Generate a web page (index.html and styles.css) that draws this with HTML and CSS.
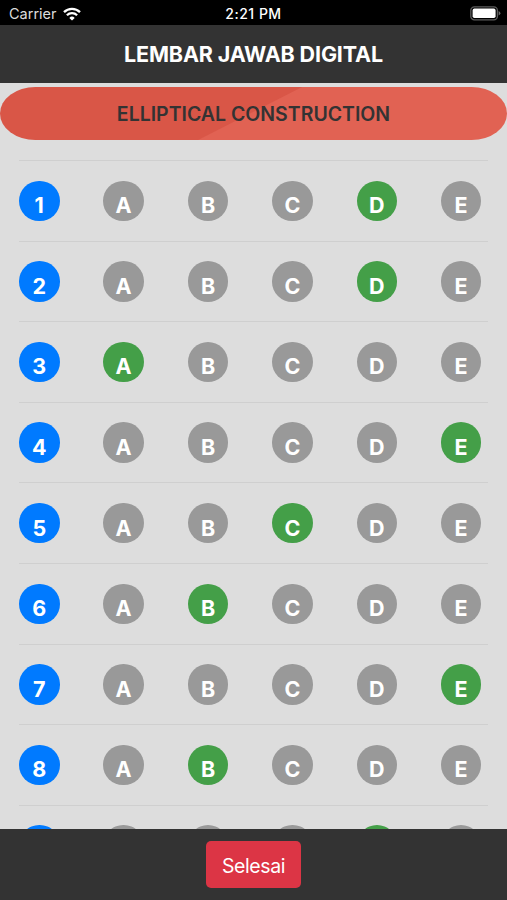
FILE: index.html
```
<!DOCTYPE html>
<html lang="id">
<head>
  <meta charset="UTF-8" />
  <meta name="viewport" content="width=device-width, initial-scale=1.0" />
  <title>Lembar Jawab Digital</title>
  <link rel="stylesheet" href="styles.css">
</head>
<body>
  <div class="screen">
    <div class="status-bar">
      <div class="carrier">
        <span>Carrier</span>
        <svg class="wifi" viewBox="0 0 18 14" fill="none" stroke="#fff" stroke-width="2.3">
          <path d="M1 5.1 A11.4 11.4 0 0 1 17 5.1" />
          <path d="M3.9 8.2 A7.2 7.2 0 0 1 14.1 8.2" />
          <path d="M9 13.6 L6.3 10.9 A3.8 3.8 0 0 1 11.7 10.9 Z" fill="#fff" stroke="none" />
        </svg>
      </div>
      <div class="clock">2:21 PM</div>
      <svg class="battery" viewBox="0 0 31 15">
        <rect x="0.8" y="0.8" width="26.6" height="13" rx="3.6" fill="none" stroke="#5c5c5c" stroke-width="1.3" />
        <rect x="2.6" y="2.6" width="23" height="9.4" rx="1.8" fill="#fff" />
        <path d="M28.6 5 Q30.4 5.8 30.4 7.3 Q30.4 8.8 28.6 9.6 Z" fill="#6b6b6b" />
      </svg>
    </div>

    <div class="header">LEMBAR JAWAB DIGITAL</div>

    <div class="content">
      <div class="subject">ELLIPTICAL CONSTRUCTION</div>
      <div class="answers" id="answers"></div>
    </div>

    <div class="footer">
      <button class="finish-btn">Selesai</button>
    </div>
  </div>

  <script>
    const options = ["A", "B", "C", "D", "E"];
    const answers = ["D", "D", "A", "E", "C", "B", "E", "B", "D"];

    function displayAnswers() {
      const list = document.getElementById("answers");
      list.innerHTML = "";

      answers.forEach((answer, index) => {
        const row = document.createElement("div");
        row.className = "row";

        let html = `<div class="circle number"><span>${index + 1}</span></div>`;
        options.forEach(option => {
          const selected = option === answer ? " selected" : "";
          html += `<div class="circle${selected}"><span>${option}</span></div>`;
        });

        row.innerHTML = html;
        list.appendChild(row);
      });
    }

    displayAnswers();
  </script>
</body>
</html>
```
FILE: styles.css
```
* {
  box-sizing: border-box;
  margin: 0;
  padding: 0;
  font-family: Inter, "Liberation Sans", sans-serif;
}

.screen {
  height: 100vh;
  display: flex;
  flex-direction: column;
  overflow: hidden;
  background: #dddddd;
}

.status-bar {
  flex: none;
  height: 25px;
  padding: 2px 6px 0 9px;
  display: grid;
  grid-template-columns: 1fr auto 1fr;
  align-items: center;
  background: #000;
  color: #fff;
  font-size: 14.5px;
}

.carrier {
  display: flex;
  align-items: center;
  gap: 6px;
  color: #dcdcdc;
}

.wifi {
  width: 18px;
  height: 14px;
}

.clock {
  font-size: 14px;
  font-weight: 500;
  letter-spacing: 0.5px;
  margin-right: 3px;
}

.battery {
  width: 31px;
  height: 15px;
  justify-self: end;
}

.header {
  flex: none;
  height: 57.5px;
  display: flex;
  align-items: center;
  justify-content: center;
  background: #333;
  color: #fff;
  font-size: 21.5px;
  font-weight: 700;
  letter-spacing: -0.15px;
}

.content {
  flex: 1;
  min-height: 0;
  padding-top: 4px;
  overflow: hidden;
}

.subject {
  height: 53.5px;
  padding-top: 2px;
  display: flex;
  align-items: center;
  justify-content: center;
  border-radius: 36px / 27px;
  background: linear-gradient(153deg, #d95647 calc(50% - 2px), #e16253 calc(50% - 1px));
  color: #333;
  font-size: 19.5px;
  font-weight: 600;
}

.answers {
  padding: 20px 19px 0;
}

.row {
  height: 80.6px;
  padding-right: 6.6px;
  display: flex;
  align-items: center;
  justify-content: space-between;
  border-top: 1px solid #cfcfcf;
}

.circle {
  width: 40.5px;
  height: 40.5px;
  padding-top: 9px;
  display: flex;
  align-items: center;
  justify-content: center;
  border-radius: 50%;
  background: #999;
  color: #fff;
  font-size: 21.5px;
  font-weight: 700;
}

.number {
  background: #007aff;
}

.selected {
  background: #449f48;
}

.footer {
  flex: none;
  height: 71px;
  padding-bottom: 0;
  display: flex;
  align-items: center;
  justify-content: center;
  background: #333;
}

.finish-btn {
  width: 95px;
  height: 47px;
  padding-top: 2px;
  border: none;
  border-radius: 5px;
  background: #dc3545;
  color: #fff;
  font-size: 19.5px;
  letter-spacing: -0.4px;
}
```
